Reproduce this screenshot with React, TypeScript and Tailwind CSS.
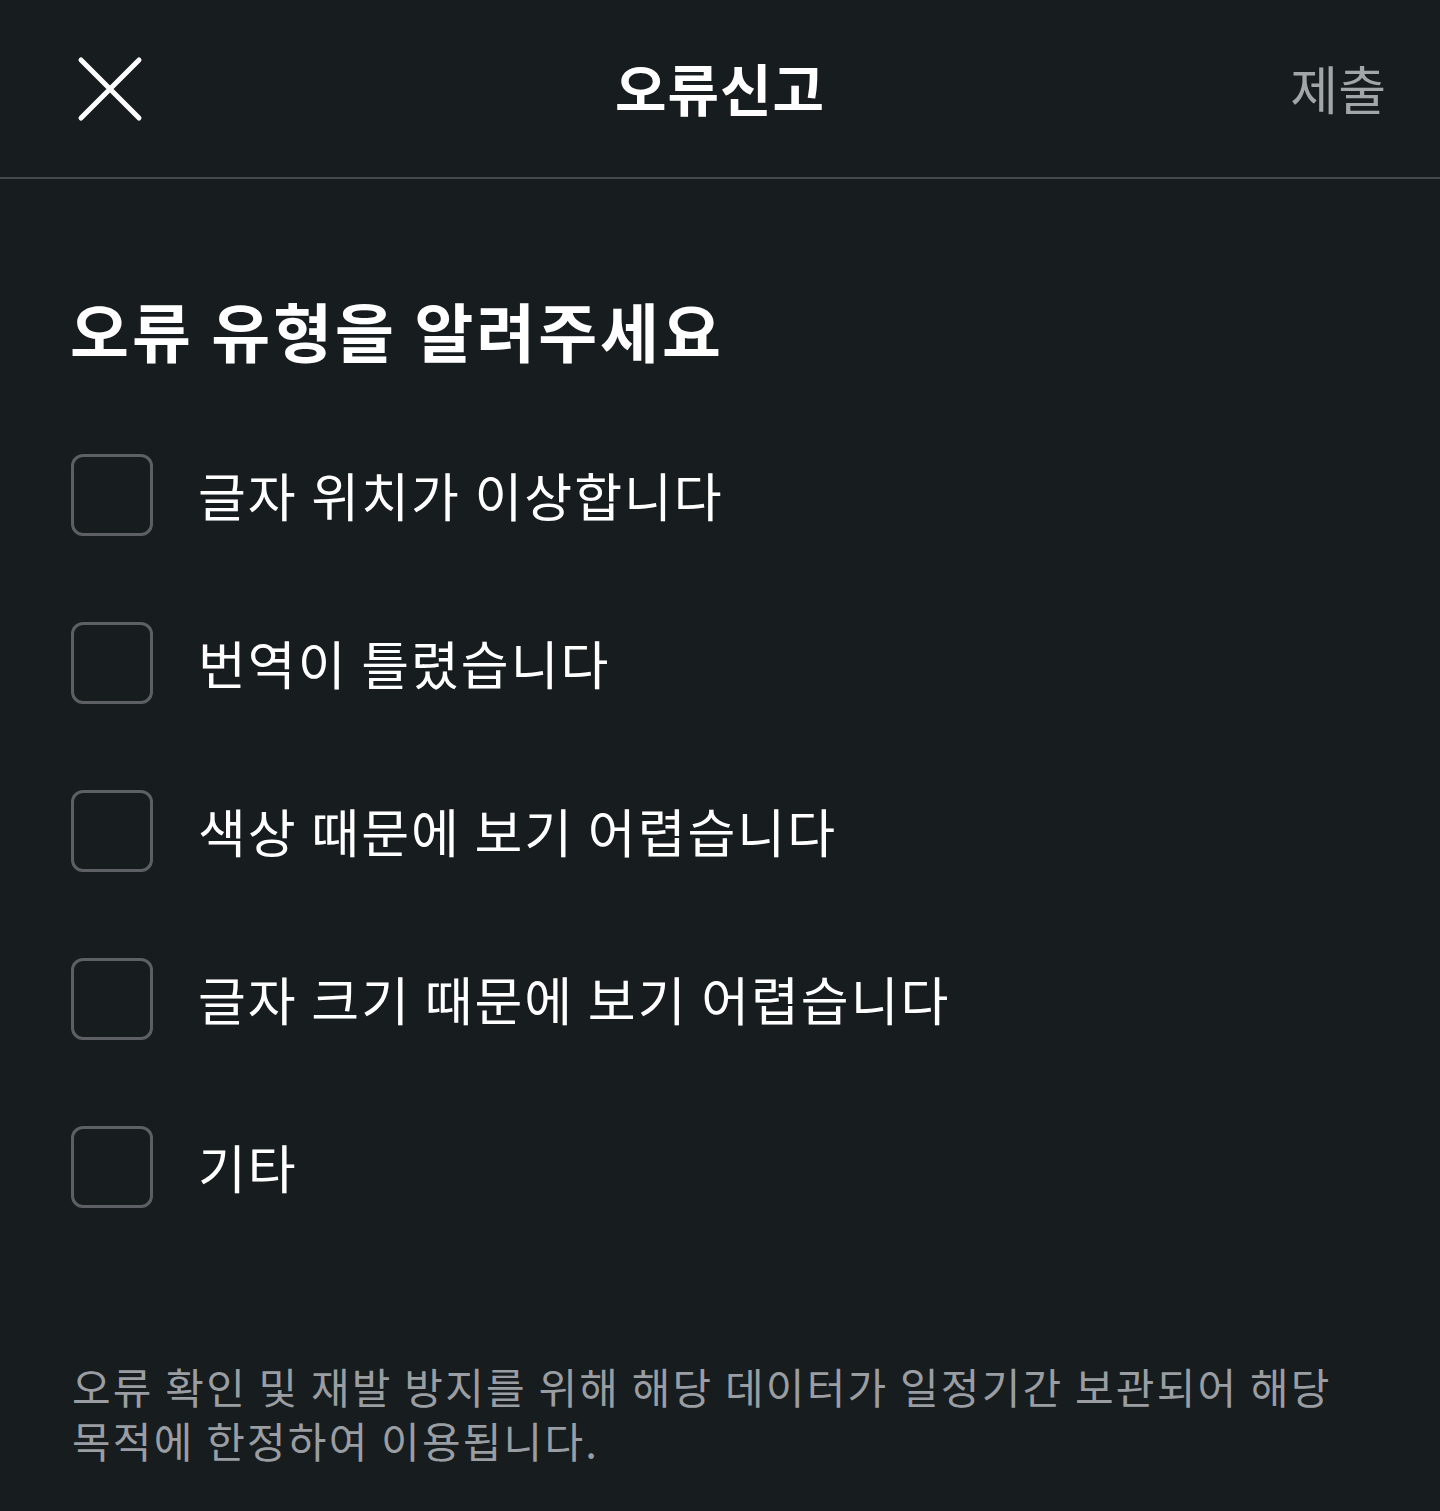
import React from "react";

const options = [
  "글자 위치가 이상합니다",
  "번역이 틀렸습니다",
  "색상 때문에 보기 어렵습니다",
  "글자 크기 때문에 보기 어렵습니다",
  "기타",
];

export default function App() {
  return (
    <div
      className="w-[1440px] h-[1511px] bg-[#171c1f] text-white flex flex-col"
      style={{ fontFamily: '"Noto Sans CJK KR", "Noto Sans", sans-serif' }}
    >
      <header className="h-[179px] flex items-center justify-between px-[72px] border-b-2 border-[#45494d] relative">
        <button className="w-[80px] h-[80px] flex items-center justify-center ml-[-2px]">
          <svg width="66" height="66" viewBox="0 0 66 66" fill="none">
            <path d="M4 4 L62 62 M62 4 L4 62" stroke="white" strokeWidth="5" strokeLinecap="round" />
          </svg>
        </button>
        <h1 className="absolute left-1/2 -translate-x-1/2 text-[56px] font-bold tracking-[1px] -mt-[4px]">오류신고</h1>
        <span className="text-[52px] text-[#a3a6a9] mr-[-18px] -mt-[2px]">제출</span>
      </header>
      <main className="px-[72px] flex-1 flex flex-col">
        <h2 className="text-[64px] font-bold mt-[110px] leading-[80px] tracking-[3px] ml-[-2px]">오류 유형을 알려주세요</h2>
        <ul className="mt-[85px] flex flex-col gap-[86px]">
          {options.map((o) => (
            <li key={o} className="flex items-center gap-[45px]">
              <span className="w-[82px] h-[82px] rounded-[12px] border-[3px] border-[#5c6064] shrink-0 ml-[-1px]" />
              <span className="text-[52px] leading-[82px] tracking-[2px]">{o}</span>
            </li>
          ))}
        </ul>
        <p className="mt-auto mb-[44px] text-[42px] leading-[54px] text-[#9a9ea2] tracking-[2.2px]">
          오류 확인 및 재발 방지를 위해 해당 데이터가 일정기간 보관되어 해당 목적에 한정하여 이용됩니다.
        </p>
      </main>
    </div>
  );
}
